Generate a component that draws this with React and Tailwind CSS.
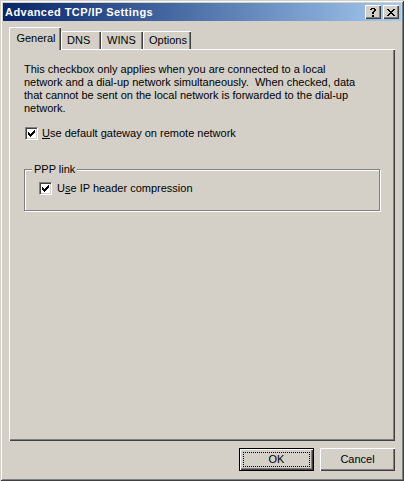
const font = { fontFamily: '"Liberation Sans", Arial, sans-serif' };

function CheckMark() {
  const px = [
    [6, 0], [5, 1], [6, 1], [0, 2], [4, 2], [5, 2], [6, 2],
    [0, 3], [1, 3], [3, 3], [4, 3], [5, 3],
    [0, 4], [1, 4], [2, 4], [3, 4], [4, 4],
    [1, 5], [2, 5], [3, 5], [2, 6],
  ];
  return (
    <svg width="7" height="7" viewBox="0 0 7 7" shapeRendering="crispEdges">
      {px.map(([x, y]) => (
        <rect key={`${x}-${y}`} x={x} y={y} width="1" height="1" fill="#000" />
      ))}
    </svg>
  );
}

function Checkbox() {
  return (
    <div className="w-[13px] h-[13px] shrink-0 bg-white flex items-center justify-center border-t border-l border-[#808080] border-r border-b border-r-white border-b-white shadow-[inset_1px_1px_#404040,inset_-1px_-1px_#d4d0c8]">
      <CheckMark />
    </div>
  );
}

function CaptionButton({ children, className = "" }) {
  return (
    <div
      className={`w-[16px] h-[14px] bg-[#d4d0c8] flex items-center justify-center shadow-[inset_1px_1px_#ffffff,inset_-1px_-1px_#404040,inset_-2px_-2px_#808080] ${className}`}
    >
      {children}
    </div>
  );
}

function HelpGlyph() {
  const rows = [".xxxx.", "xx..xx", "....xx", "...xx.", "..xx..", "..xx..", "......", "..xx..", "..xx.."];
  return (
    <svg width="6" height="9" viewBox="0 0 6 9" shapeRendering="crispEdges">
      {rows.flatMap((r, y) =>
        r.split("").map((c, x) => (c === "x" ? <rect key={`${x}-${y}`} x={x} y={y} width="1" height="1" fill="#000" /> : null))
      )}
    </svg>
  );
}

function CloseGlyph() {
  const rows = ["xx....xx", ".xx..xx.", "..xxxx..", "...xx...", "..xxxx..", ".xx..xx.", "xx....xx"];
  return (
    <svg width="8" height="7" viewBox="0 0 8 7" shapeRendering="crispEdges">
      {rows.flatMap((r, y) =>
        r.split("").map((c, x) => (c === "x" ? <rect key={`${x}-${y}`} x={x} y={y} width="1" height="1" fill="#000" /> : null))
      )}
    </svg>
  );
}

function Tab({ label, width, active }) {
  if (active) {
    return (
      <div
        className={`relative z-10 ${width} h-[23px] -mb-[1px] bg-[#d4d0c8] border-l border-t border-white rounded-tl-[2px] shadow-[inset_-1px_0_#404040,inset_-2px_0_#808080] flex items-start justify-center pt-[4px]`}
      >
        <span className="pl-[1px]">{label}</span>
      </div>
    );
  }
  return (
    <div
      className={`${width} h-[18px] bg-[#d4d0c8] border-l border-t border-white rounded-tl-[2px] shadow-[inset_-1px_0_#404040,inset_-2px_0_#808080] flex items-start pt-[2px] pl-[5px]`}
    >
      {label}
    </div>
  );
}

export default function App() {
  return (
    <div
      style={font}
      className="w-[404px] h-[481px] bg-[#d4d0c8] p-[3px] flex flex-col text-[11px] text-black leading-[13px] shadow-[inset_1px_1px_#d4d0c8,inset_-1px_-1px_#404040,inset_2px_2px_#ffffff,inset_-2px_-2px_#808080]"
    >
      <div className="h-[18px] shrink-0 bg-gradient-to-r from-[#0a246a] to-[#a6caf0] flex items-center pl-[2px] pr-[2px]">
        <span className="text-white font-bold text-[11px] tracking-[0.45px]">Advanced TCP/IP Settings</span>
        <div className="ml-auto flex gap-[2px]">
          <CaptionButton>
            <HelpGlyph />
          </CaptionButton>
          <CaptionButton>
            <CloseGlyph />
          </CaptionButton>
        </div>
      </div>

      <div className="px-[6px] pt-[6px] flex flex-col">
        <div className="flex items-end h-[22px]">
          <Tab label="General" width="w-[52px]" active />
          <Tab label="DNS" width="w-[40px]" />
          <Tab label="WINS" width="w-[42px]" />
          <Tab label="Options" width="w-[48px]" />
        </div>

        <div className="h-[392px] border-l border-t border-white shadow-[inset_-1px_-1px_#404040,inset_-2px_-2px_#808080] pl-[14px] pt-[13px]">
          <p className="whitespace-pre">
            {"This checkbox only applies when you are connected to a local\nnetwork and a dial-up network simultaneously.  When checked, data\nthat cannot be sent on the local network is forwarded to the dial-up\nnetwork."}
          </p>

          <div className="mt-[12px] flex items-center gap-[4px] pl-[1px]">
            <Checkbox />
            <span>
              <span className="underline">U</span>se default gateway on remote network
            </span>
          </div>

          <div className="relative mt-[29px] w-[356px] h-[42px] border border-[#808080] shadow-[inset_1px_1px_#ffffff,1px_1px_#ffffff] pl-[14px] pt-[12px]">
            <span className="absolute -top-[7px] left-[7px] px-[2px] bg-[#d4d0c8]">PPP link</span>
            <div className="flex items-center gap-[5px]">
              <Checkbox />
              <span>
                U<span className="underline">s</span>e IP header compression
              </span>
            </div>
          </div>
        </div>

        <div className="mt-[7px] flex justify-end gap-[6px]">
          <div className="relative w-[75px] h-[23px] border border-black shadow-[inset_1px_1px_#ffffff,inset_-1px_-1px_#404040,inset_-2px_-2px_#808080] flex items-center justify-center">
            <div className="absolute inset-[3px] border border-dotted border-black" />
            <span>OK</span>
          </div>
          <div className="w-[75px] h-[23px] shadow-[inset_1px_1px_#ffffff,inset_-1px_-1px_#404040,inset_-2px_-2px_#808080] flex items-center justify-center">
            <span>Cancel</span>
          </div>
        </div>
      </div>
    </div>
  );
}
